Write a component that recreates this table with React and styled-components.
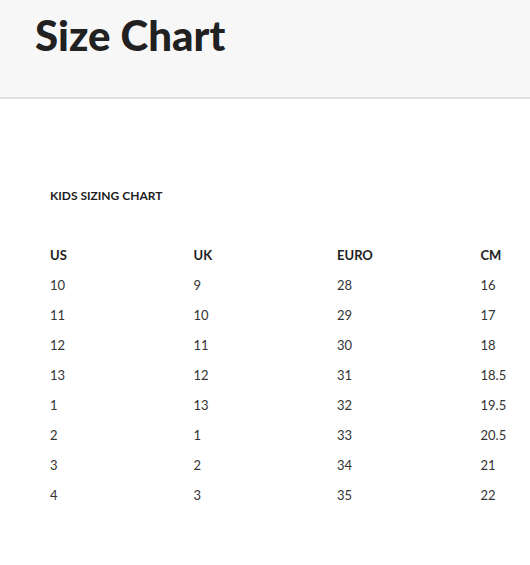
import styled, { createGlobalStyle } from "styled-components";

const GlobalStyle = createGlobalStyle`
  html, body {
    margin: 0;
    padding: 0;
    background: #ffffff;
  }
  body {
    font-family: Lato, "Open Sans", sans-serif;
    color: #222;
  }
`;

const columns = ["US", "UK", "EURO", "CM"];

const rows = [
  ["10", "9", "28", "16"],
  ["11", "10", "29", "17"],
  ["12", "11", "30", "18"],
  ["13", "12", "31", "18.5"],
  ["1", "13", "32", "19.5"],
  ["2", "1", "33", "20.5"],
  ["3", "2", "34", "21"],
  ["4", "3", "35", "22"],
];

export default function App() {
  return (
    <>
      <GlobalStyle />
      <Header>
        <Title>Size Chart</Title>
      </Header>
      <Content>
        <ChartTitle>KIDS SIZING CHART</ChartTitle>
        <Table>
          {columns.map((c) => (
            <Cell key={c} head>
              {c}
            </Cell>
          ))}
          {rows.map((r, i) =>
            r.map((v, j) => <Cell key={i + "-" + j}>{v}</Cell>)
          )}
        </Table>
      </Content>
    </>
  );
}

const Header = styled.header`
  background: #f7f7f7;
  height: 99px;
  box-sizing: border-box;
  padding: 14px 0 0 35px;
  border-bottom: 2px solid #dfdfdf;
`;

const Title = styled.h1`
  margin: 0;
  font-family: Lato, sans-serif;
  font-weight: 900;
  font-size: 42px;
  line-height: 42px;
  color: #212121;
`;

const Content = styled.main`
  padding: 90px 0 40px 50px;
`;

const ChartTitle = styled.h2`
  margin: 0;
  font-size: 12px;
  line-height: 14px;
  font-weight: 700;
  color: #1e1e1e;
`;

const Table = styled.div`
  margin-top: 37px;
  display: grid;
  grid-template-columns: 143.5px 143.5px 143.5px 1fr;
`;

const Cell = styled.div`
  font-size: 13px;
  line-height: 30px;
  font-weight: ${(p) => (p.head ? 700 : 400)};
  color: ${(p) => (p.head ? "#1e1e1e" : "#333")};
`;
